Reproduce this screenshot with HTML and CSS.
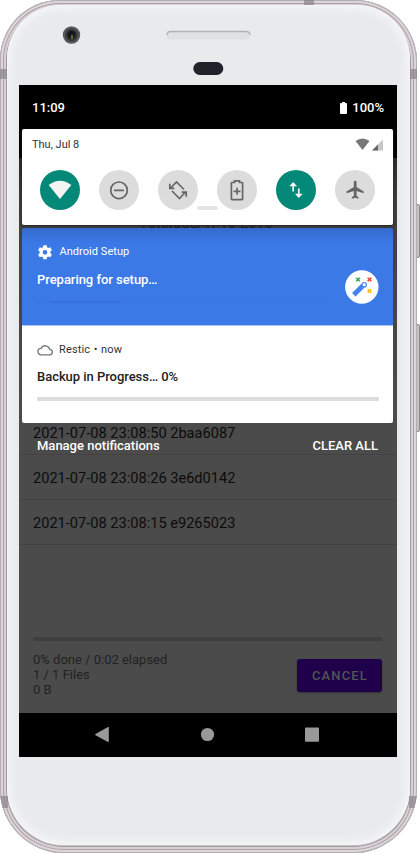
FILE: index.html
```html
<!DOCTYPE html>
<html lang="en">
<head>
<meta charset="utf-8">
<title>Restic backup</title>
<link rel="stylesheet" href="styles.css">
</head>
<body>
<div class="device">
  <i class="side-key power"></i><i class="side-key volume"></i>
  <div class="body">
    <i class="band top"></i><i class="band left-top"></i><i class="band right-top"></i><i class="band left-bottom"></i><i class="band right-bottom"></i>
    <div class="face">
      <div class="bezel">
        <svg width="378" height="80" viewBox="19 5 378 80">
          <circle cx="71.5" cy="35" r="8.7" fill="#55585a"/><circle cx="71.5" cy="35" r="6.3" fill="#35383b"/><circle cx="71.5" cy="34.8" r="4" fill="#141719"/><path d="M71 35h2v4h-2z" fill="#66691f"/>
          <rect x="166.500" y="31" width="84" height="8.500" rx="4.200" fill="#dfe1e4"/><path d="M167 35q0-3.500 4-3.500h75q4 0 4 3.500" fill="none" stroke="#afb4bb" stroke-width="1.300"/>
          <rect x="193.300" y="62" width="30" height="13" rx="6.500" fill="#202329"/>
        </svg>
      </div>
      <main class="screen">
        <section class="app">
          <div class="toolbar"></div>
          <div class="path">/storage/1F10-2010</div>
          <ul class="snapshots">
            <li>2021-07-08 23:08:50 2baa6087</li>
            <li>2021-07-08 23:08:26 3e6d0142</li>
            <li>2021-07-08 23:08:15 e9265023</li>
          </ul>
          <div class="job">
            <div class="job-bar"></div>
            <div class="job-row">
              <div class="stats">0% done / 0:02 elapsed<br>1 / 1 Files<br>0 B</div>
              <button class="cancel">CANCEL</button>
            </div>
          </div>
          <nav class="nav">
            <svg width="378" height="44" viewBox="19 713 378 44" fill="#999"><path d="M95.500 735.200q-.6-.6 0-1.200L108 727q.8-.3.8.5V741.500q0 .8-.8.500z"/><circle cx="207.500" cy="734.500" r="6.600"/><rect x="305" y="727.500" width="14" height="14.200" rx=".7"/></svg>
          </nav>
        </section>
        <section class="shade">
          <header class="status"><span>11:09</span><span class="battery"><svg width="7" height="12" viewBox="0 0 7 12"><path d="M2 0h3v1h1q1 0 1 1v9q0 1-1 1H1q-1 0-1-1V2q0-1 1-1h1z" fill="#fff"/></svg>100%</span></header>
          <div class="quick">
            <div class="date"><span>Thu, Jul 8</span>
              <svg width="28" height="13" viewBox="355 138.500 28 13"><path d="M355.500 141.500q7-5 14 0l-7 9z" fill="#777"/><path d="M383 140v11h-11z" fill="#c6c6c6"/><path d="M378 145v6h-6z" fill="#666"/></svg>
            </div>
            <div class="tiles">
              <span class="tile on"><svg viewBox="0 0 40 40"><path d="M8.700 15q11.300-8.500 22.600 0L20 29z" fill="#f4f4f4"/></svg></span>
              <span class="tile"><svg viewBox="0 0 40 40"><circle cx="20" cy="20.300" r="8.300"/><path d="M15 20.300h10"/></svg></span>
              <span class="tile"><svg viewBox="0 0 40 40"><path d="M13 17.500l5.500-5.500 7.500 7.500M27 22.500L21.500 28.500 14 21M11.800 13.800v4.500h4.500M28.200 26.700v-4.500h-4.500"/></svg></span>
              <span class="tile"><svg viewBox="0 0 40 40"><path d="M17.500 12.500v-1.700h5v1.700H25q.6 0 .6.600V29q0 .6-.6.600H15q-.6 0-.6-.6V13.100q0-.6.6-.6zM20 17.800v7M16.500 21.300h7"/></svg></span>
              <span class="tile on"><svg viewBox="0 0 40 40"><path d="M17.200 21.500v-8M22.800 18.500v8"/><path class="solid" d="M17.200 12l3.900 4.200h-7.800zM22.800 28l3.900-4.200h-7.800z"/></svg></span>
              <span class="tile"><svg viewBox="0 0 40 40"><path class="solid" d="M28.700 23.300v-1.800L21.600 17v-4.800q0-1.400-1.400-1.400t-1.400 1.400V17l-7.300 4.500v1.800l7.300-2.300v4.800l-1.900 1.400v1.500l3.300-1 3.200 1v-1.500l-1.800-1.400V21z"/></svg></span>
            </div>
            <i class="handle"></i>
          </div>
          <article class="note setup">
            <div class="setup-text">
              <div class="source"><svg class="source-icon" viewBox="0 0 24 24"><path fill="#fff" fill-rule="evenodd" d="M9.500 2h5l.5 3 2 1.100 2.900-1.100 2.500 4.300-2.400 2v2.400l2.400 2-2.500 4.300L17 18.900 15 20l-.5 3h-5L9 20l-2-1.100L4.100 20l-2.500-4.300 2.400-2v-2.400l-2.400-2L4.100 5 7 6.100 9 5zM12 9a3.500 3.500 0 1 0 0 7 3.500 3.500 0 0 0 0-7z"/></svg>Android Setup</div>
              <h2>Preparing for setup…</h2>
              <div class="setup-bar"><i></i></div>
            </div>
            <svg class="wand" viewBox="345 269.500 34 34"><circle cx="361.800" cy="286.500" r="16.700" fill="#fff"/><path d="M353.800 294.300l9-9" stroke="#4285f4" stroke-width="5"/><circle cx="364.200" cy="284.200" r="2.200" fill="#fff" stroke="#4285f4" stroke-width="1.200"/><g stroke-width="1.600" fill="none"><path stroke="#34a853" d="M356.200 277.200l3.600 3.600m0-3.600l-3.600 3.600"/><path stroke="#ea4335" d="M367.700 277.200l3.600 3.600m0-3.600l-3.600 3.600"/><path stroke="#fbbc04" d="M367.700 288.700l3.600 3.600m0-3.600l-3.600 3.600"/></g></svg>
          </article>
          <article class="note restic">
            <div class="source"><svg class="cloud" viewBox="0 0 17 12"><path d="M4 10.800a3.200 3.200 0 0 1 .2-6.400 4.500 4.500 0 0 1 8.500.9 2.800 2.800 0 0 1 .6 5.500z" fill="none" stroke="#777" stroke-width="1.300"/></svg>Restic • now</div>
            <h2>Backup in Progress… 0%</h2>
            <div class="backup-bar"></div>
          </article>
          <footer class="shade-actions"><span>Manage notifications</span><span>CLEAR ALL</span></footer>
        </section>
      </main>
    </div>
  </div>
</div>
</body>
</html>
```
FILE: styles.css
```css
* { box-sizing: border-box; }
body { margin: 0; background: #fff; font-family: Roboto, sans-serif; overflow: hidden; }
i { display: block; }
svg { display: block; flex: none; }
h2 { margin: 0; font-size: 13px; font-weight: 500; line-height: 16px; letter-spacing: -.04px; }
.device { position: relative; width: 420px; height: 853px; }
.body { position: relative; width: 417px; height: 853px; padding: 5px 7px 8px; border-radius: 60px 62px 64px 64px; background: #c9c1c4; box-shadow: inset 0 0 0 1px #b5aeb1, inset 0 0 0 3px #ddd5d9, inset 0 0 0 4px #aaa2a6, inset 0 0 0 6px #d8d0d3, inset 0 0 0 7px #a19c9f; overflow: hidden; }
.face { height: 840px; border-radius: 54px 54px 57px 57px; background: #e9eaec; padding: 0 13px 0 12px; box-shadow: inset 0 0 9px 4px #f5f6f8; }
.bezel { height: 80px; }
.band { position: absolute; background: #8e878b; opacity: .75; }
.top { left: 304px; top: 0; width: 10px; height: 5px; }
.left-top, .right-top { top: 69px; width: 7px; height: 10px; }
.left-top, .left-bottom { left: 0; }
.right-top, .right-bottom { right: 0; }
.left-bottom, .right-bottom { top: 796px; width: 8px; height: 12px; }
.side-key { position: absolute; left: 415px; width: 5px; background: #c3c1c2; border: 1px solid #8f8c8e; border-radius: 0 2px 2px 0; }
.power { top: 204px; height: 54px; }
.volume { top: 324px; height: 108px; }
.screen { display: grid; width: 378px; height: 672px; background: #4b4b4b; overflow: hidden; }
.app, .shade { grid-area: 1 / 1; min-width: 0; }
.app { display: flex; flex-direction: column; height: 672px; background: linear-gradient(#2a2a2a 73px, #3f3f3f 120px, #4b4b4b 320px); }
.toolbar { height: 73px; background: #000; }
.path { margin-top: 56px; height: 18px; padding-right: 1px; text-align: center; font-size: 14.600px; line-height: 18px; color: #1c1c1c; }
.snapshots { list-style: none; margin: 178px 0 0; padding: 0; }
.snapshots li { height: 45px; padding-left: 14px; border-bottom: 1px solid #424242; font-size: 14.600px; line-height: 46px; color: #0c0c0c; }
.job { margin-top: auto; padding: 0 15px 0 14px; height: 76px; }
.job-bar { height: 4px; background: #3f3f3f; }
.job-row { display: flex; justify-content: space-between; padding-top: 11px; }
.stats { font-size: 13px; line-height: 15px; color: #222; }
.cancel { margin: 7px 0 0; padding: 0; width: 85px; height: 33px; border: 0; border-radius: 3px; background: #1e004b; color: #555; font: 500 13px/34px Roboto, sans-serif; letter-spacing: 1.150px; text-indent: 1px; box-shadow: 0 1px 2px #333; }
.nav { height: 44px; background: #000; }
.shade { position: relative; z-index: 1; }
.status { display: flex; justify-content: space-between; padding: 14px 13px 0 13px; height: 43px; background: #000; color: #fff; font-size: 13px; font-weight: 500; line-height: 17px; }
.battery { display: flex; align-items: center; gap: 5px; height: 17px; }
.quick { position: relative; margin: 1px 4px 0 3px; height: 96px; background: #fff; border-radius: 2px; box-shadow: 0 1px 3px #222; }
.date { display: flex; justify-content: space-between; padding: 9px 10px 0; font-size: 11px; line-height: 14px; color: #333; }
.tiles { display: flex; justify-content: space-between; padding: 17.500px 18px 0; }
.tile { width: 40px; height: 40px; border-radius: 50%; background: #dcdcdc; }
.tile svg { width: 40px; height: 40px; fill: none; stroke: #666; stroke-width: 1.700; }
.tile .solid { fill: #666; stroke: none; }
.tile.on { background: #048877; }
.tile.on svg { stroke: #f4f4f4; }
.tile.on .solid { fill: #f4f4f4; }
.tile.on:first-child svg { stroke: none; }
.handle { position: absolute; left: 175px; top: 77px; width: 21px; height: 4px; border-radius: 2px; background: #e5e5e5; }
.note { margin: 0 4px 0 3px; }
.setup { display: flex; justify-content: space-between; margin-top: 3px; height: 98px; padding: 16px 14px 0 15px; background: linear-gradient(#356acd, #3b79e7 15px); border-bottom: 1px solid #a9c4f5; color: #fff; border-radius: 2px 2px 0 0; }
.setup-text { width: 291px; }
.source { display: flex; align-items: center; height: 15px; font-size: 11px; line-height: 15px; letter-spacing: .05px; }
.source-icon { width: 16px; height: 16px; margin-right: 6.500px; }
.setup h2 { margin-top: 13px; }
.setup-bar { height: 2px; margin-top: 13px; background: #3976e2; }
.setup-bar i { height: 2px; width: 69px; margin-left: 14px; background: #3570db; }
.wand { width: 34px; height: 34px; margin-top: 26px; }
.restic { height: 97px; padding: 16px 14px 0 15px; background: #fff; color: #333; border-radius: 0 0 2px 2px; }
.restic .source { letter-spacing: .15px; word-spacing: .6px; }
.cloud { width: 17px; height: 12px; margin-right: 5px; }
.restic h2 { margin-top: 12px; color: #222; }
.backup-bar { height: 4px; margin-top: 12px; background: #dcdcdc; }
.shade-actions { display: flex; justify-content: space-between; padding: 15px 19px 0 18px; color: #fff; font-size: 13px; font-weight: 500; line-height: 16px; }
```
